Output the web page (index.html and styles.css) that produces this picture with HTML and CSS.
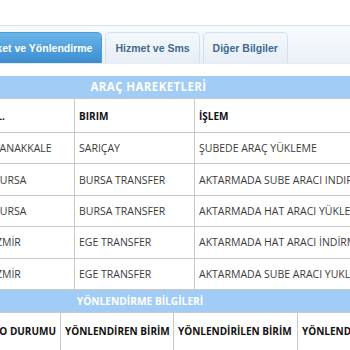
FILE: index.html
```html
<!DOCTYPE html>
<html lang="tr">
<head>
    <meta charset="UTF-8">
    <meta name="viewport" content="width=device-width, initial-scale=1.0">
    <title>Gönderi Takip - Detay</title>
    <link rel="stylesheet" href="styles.css">
</head>
<body>
    <div class="page">
        <!-- sekmeler -->
        <div class="tabbar">
            <div class="tab active">Hareket ve Yönlendirme</div>
            <div class="tab">Hizmet ve Sms</div>
            <div class="tab">Diğer Bilgiler</div>
        </div>

        <!-- araç hareketleri -->
        <div class="section">
            <div class="section-title">ARAÇ HAREKETLERİ</div>
            <table class="grid moves">
                <colgroup>
                    <col class="c-date">
                    <col class="c-city">
                    <col class="c-unit">
                    <col class="c-op">
                </colgroup>
                <tr class="head">
                    <th>TARİH</th>
                    <th>İL.</th>
                    <th>BIRIM</th>
                    <th>İŞLEM</th>
                </tr>
                <tr>
                    <td>12.03.2021 09:14</td>
                    <td>ÇANAKKALE</td>
                    <td>SARIÇAY</td>
                    <td>ŞUBEDE ARAÇ YÜKLEME</td>
                </tr>
                <tr>
                    <td>12.03.2021 18:40</td>
                    <td>BURSA</td>
                    <td>BURSA TRANSFER</td>
                    <td>AKTARMADA SUBE ARACI INDIRME</td>
                </tr>
                <tr>
                    <td>12.03.2021 21:05</td>
                    <td>BURSA</td>
                    <td>BURSA TRANSFER</td>
                    <td>AKTARMADA HAT ARACI YÜKLEME</td>
                </tr>
                <tr>
                    <td>13.03.2021 03:22</td>
                    <td>İZMİR</td>
                    <td>EGE TRANSFER</td>
                    <td>AKTARMADA HAT ARACI İNDİRME</td>
                </tr>
                <tr>
                    <td>13.03.2021 06:10</td>
                    <td>İZMİR</td>
                    <td>EGE TRANSFER</td>
                    <td>AKTARMADA SUBE ARACI YUKLEME</td>
                </tr>
            </table>
        </div>

        <!-- yönlendirme bilgileri -->
        <div class="section">
            <div class="section-title slim">YÖNLENDİRME BİLGİLERİ</div>
            <table class="grid routes">
                <colgroup>
                    <col class="r-no">
                    <col class="r-state">
                    <col class="r-from">
                    <col class="r-to">
                    <col class="r-type">
                </colgroup>
                <tr class="head tall">
                    <th>GÖNDERİ NO</th>
                    <th class="right">KARGO DURUMU</th>
                    <th>YÖNLENDİREN BİRİM</th>
                    <th>YÖNLENDİRİLEN BİRİM</th>
                    <th>YÖNLENDİRME TARİHİ</th>
                </tr>
            </table>
        </div>
    </div>
</body>
</html>
```

FILE: styles.css
```css
* {
    margin: 0;
    padding: 0;
    box-sizing: border-box;
}

html, body {
    overflow: hidden;
}

body {
    background: #ffffff;
    font-family: 'Open Sans', 'Liberation Sans', sans-serif;
    color: #333333;
}

/* sayfa sola kaydırılmış halde */
.page {
    width: 730px;
    margin-left: -220px;
    padding-top: 25px;
}

.tabbar {
    height: 39px;
    border-top: 1px solid #dcdcdc;
    border-bottom: 1px solid #e4ebf2;
    background: linear-gradient(#f8fbfd, #e9f1f8);
    display: flex;
    align-items: flex-end;
    gap: 3px;
    padding-left: 183px;
}

.tab {
    height: 31px;
    line-height: 30px;
    padding: 0 9px;
    font-family: 'Liberation Sans', Arial, sans-serif;
    font-size: 10.5px;
    font-weight: 700;
    color: #3e6b8f;
    background: linear-gradient(#f4f8fc, #e6eef7);
    border: 1px solid #d3e0ec;
    border-bottom: none;
    border-radius: 5px 5px 0 0;
    white-space: nowrap;
}

.tab.active {
    color: #ffffff;
    background: linear-gradient(#6ab4e8, #3b8dd0);
    border-color: #4b9bd8;
}

.section {
    margin-top: 12px;
}

.section + .section {
    margin-top: 0;
}

.section-title {
    height: 22px;
    line-height: 22px;
    padding-left: 7px;
    background: #a0ccf6;
    color: #ffffff;
    font-size: 11.5px;
    font-weight: 700;
    letter-spacing: 0.4px;
    text-align: center;
}

.section-title.slim {
    font-size: 10.2px;
    letter-spacing: 0;
    padding-left: 0;
    padding-right: 10px;
}

.grid {
    width: 100%;
    border-collapse: collapse;
    table-layout: fixed;
}

.grid th,
.grid td {
    border: 1px solid #c9c9c9;
    padding: 0 4px;
    text-align: left;
    white-space: nowrap;
    overflow: hidden;
    vertical-align: middle;
}

.grid td {
    height: 31.4px;
    font-size: 10.5px;
    color: #3a3a3a;
}

.grid th {
    height: 34px;
    font-size: 10px;
    color: #111111;
    font-weight: 700;
}

.grid .tall th {
    height: 38px;
}

.grid th.right {
    text-align: right;
}

.c-date { width: 208px; }
.c-city { width: 86px; }
.c-unit { width: 120px; }
.c-op { width: 316px; }

.r-no { width: 140px; }
.r-state { width: 140px; }
.r-from { width: 113px; }
.r-to { width: 124px; }
.r-type { width: 213px; }
```
